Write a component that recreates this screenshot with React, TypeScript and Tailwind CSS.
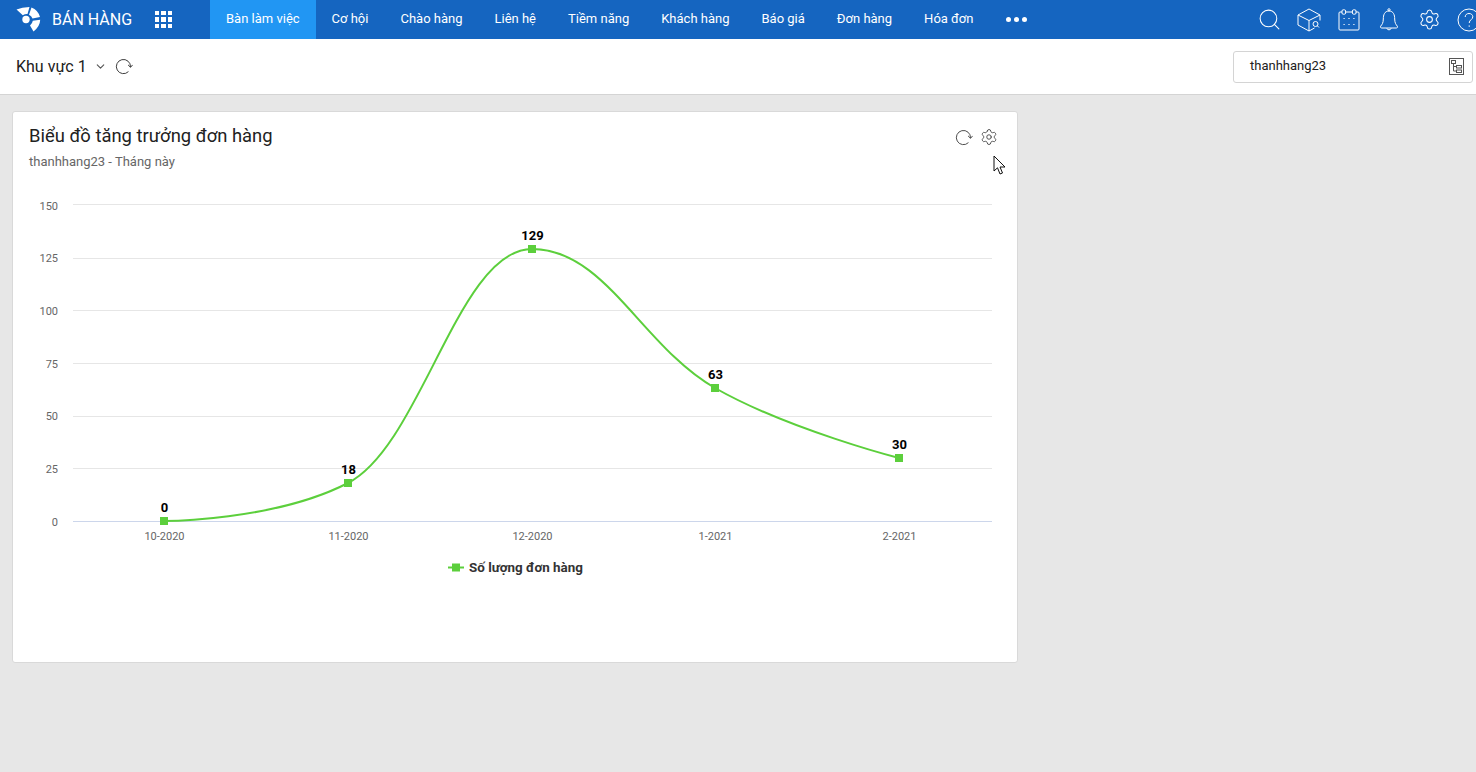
import { Search, Settings, ChevronDown } from "lucide-react";

const menu = ["Bàn làm việc", "Cơ hội", "Chào hàng", "Liên hệ", "Tiềm năng", "Khách hàng", "Báo giá", "Đơn hàng", "Hóa đơn"];

const yTicks = [
  { y: 205, line: 204.5, label: "150" },
  { y: 257, line: 258.5, label: "125" },
  { y: 310, line: 310.5, label: "100" },
  { y: 363, line: 363.5, label: "75" },
  { y: 415, line: 416.5, label: "50" },
  { y: 468, line: 468.5, label: "25" },
  { y: 521, line: 521.5, label: "0" },
];

const points = [
  { x: 164, y: 521, value: "0", month: "10-2020" },
  { x: 348, y: 483, value: "18", month: "11-2020" },
  { x: 532, y: 249, value: "129", month: "12-2020" },
  { x: 715, y: 388, value: "63", month: "1-2021" },
  { x: 899, y: 458, value: "30", month: "2-2021" },
];

const Logo = () => (
  <svg width="26" height="28" viewBox="15 6 26 28" fill="white">
    <circle cx="26" cy="19.5" r="3.7" />
    <path d="M16.5 9.5 Q22 7 29.5 7 L27.5 14 Q25 13.8 22.8 15.3 Z" />
    <path d="M31.5 7.5 Q38 10 40 17 L32.5 18.5 Q31.5 16 29 14.8 Z" />
    <path d="M40.2 19.8 Q40 26.5 33.5 31.5 L30 25.5 Q32.3 23.8 32.8 20.8 Z" />
  </svg>
);

const AppGrid = () => (
  <div className="grid grid-cols-3 gap-[2px] w-[17px]">
    {Array.from({ length: 9 }).map((_, i) => (
      <div key={i} className="w-[4.4px] h-[4.4px] bg-white" />
    ))}
  </div>
);

const BoxIcon = () => (
  <svg width="24" height="24" viewBox="0 0 24 24" fill="none" stroke="white" strokeWidth="1">
    <path d="M23 12.5 V7 L12 1 L1 7 V17 L12 23 L17.5 20" />
    <path d="M1 7 L12 12.5 V23 M12 12.5 L23 7" />
    <circle cx="18.5" cy="16" r="2.5" />
    <path d="M20.3 17.8 L22 19.5" />
  </svg>
);

const CalendarIcon = () => (
  <svg width="22" height="22" viewBox="0 0 22 22" fill="none" stroke="white" strokeWidth="1">
    <rect x="1" y="3" width="20" height="18" rx="1" />
    <rect x="4" y="0.8" width="3.6" height="4.4" rx="1.2" fill="#1565c0" />
    <rect x="14.4" y="0.8" width="3.6" height="4.4" rx="1.2" fill="#1565c0" />
    <path d="M5.5 9.5h1.2M10.4 9.5h1.2M15.3 9.5h1.2M5.5 15.5h1.2M10.4 15.5h1.2M15.3 15.5h1.2" />
  </svg>
);

const BellIcon = () => (
  <svg width="24" height="24" viewBox="0 0 24 24" fill="none" stroke="white" strokeWidth="1">
    <circle cx="12" cy="1.8" r="1.1" />
    <path d="M12 3 C7.5 3 6.3 7 6.3 11 C6.3 15 5 16.5 3.8 18 C3 19.2 3.6 20 4.8 20 H19.2 C20.4 20 21 19.2 20.2 18 C19 16.5 17.7 15 17.7 11 C17.7 7 16.5 3 12 3 Z" />
    <path d="M9.8 20.2 A2.3 2.3 0 0 0 14.2 20.2" />
  </svg>
);

const HelpIcon = () => (
  <svg width="24" height="24" viewBox="0 0 24 24" fill="none" stroke="white" strokeWidth="1">
    <circle cx="12" cy="12" r="11" />
    <path d="M8.2 9 C8.2 6.6 10 5.5 12 5.5 C14.2 5.5 15.8 6.9 15.8 8.8 C15.8 11.6 12.2 11.8 12.2 15" />
    <path d="M12.2 17.4 V18.8" />
  </svg>
);

const RefreshIcon = () => (
  <svg width="18" height="17" viewBox="0 0 19 18" fill="none" stroke="currentColor" strokeWidth="1">
    <path d="M14.2 14.4 A7.5 7.5 0 1 1 16.4 9.5" />
    <path d="M13.8 7.3 L16.4 9.9 L18.6 7.3" />
  </svg>
);

const TreeIcon = () => (
  <svg width="15" height="17" viewBox="0 0 15 17" fill="none" stroke="#555" strokeWidth="1">
    <rect x="0.5" y="0.5" width="14" height="16" />
    <rect x="2.5" y="2.5" width="4" height="3" />
    <rect x="7.5" y="7.5" width="5" height="2.5" />
    <rect x="7.5" y="12" width="5" height="2.5" />
    <path d="M4.5 5.5 V13 H7.5 M4.5 8.5 H7.5" />
  </svg>
);

const Cursor = () => (
  <svg width="14" height="21" viewBox="0 0 14 21" fill="white" stroke="#111" strokeWidth="1">
    <path d="M1 1 V16 L4.5 12.8 L7 19 L9.5 18 L7 12 H12 Z" />
  </svg>
);

const GrowthChart = () => (
  <svg width="1004" height="400" viewBox="13 190 1004 400">
    {yTicks.map((t) => (
      <g key={t.label}>
        <line x1="73" x2="992" y1={t.line} y2={t.line} stroke={t.label === "0" ? "#ccd6eb" : "#e6e6e6"} strokeWidth="1" />
        <text x="58" y={t.y + 5} textAnchor="end" fontSize="11" fill="#666666" fontFamily="Roboto, sans-serif">
          {t.label}
        </text>
      </g>
    ))}
    <path
      d="M164 521 C164 521 274.4 521 348 483 C421.6 445 458.4 249 532 249 C605.2 249 641.8 346.2 715 388 C788.6 429.8 899 458 899 458"
      fill="none"
      stroke="#5ccf3c"
      strokeWidth="2"
    />
    {points.map((p) => (
      <g key={p.month}>
        <rect x={p.x - 4} y={p.y - 4} width="8" height="8" fill="#5ccf3c" />
        <text x={p.x + 0.5} y={p.y - 9} textAnchor="middle" fontSize="13" fontWeight="700" fill="#000000" fontFamily="Roboto, sans-serif">
          {p.value}
        </text>
        <text x={p.x + 0.5} y="540" textAnchor="middle" fontSize="11" fill="#666666" fontFamily="Roboto, sans-serif">
          {p.month}
        </text>
      </g>
    ))}
    <line x1="448" x2="464" y1="567.5" y2="567.5" stroke="#5ccf3c" strokeWidth="2" />
    <rect x="452" y="563.5" width="8" height="8" fill="#5ccf3c" />
    <text x="469" y="572" fontSize="13.4" fontWeight="700" fill="#333333" fontFamily="Roboto, sans-serif">
      Số lượng đơn hàng
    </text>
  </svg>
);

export default function App() {
  return (
    <div className="h-screen w-full overflow-hidden bg-[#e7e7e7] font-['Roboto',sans-serif]">
      {/* Header */}
      <div className="h-[39px] bg-[#1565c0] flex items-center text-white">
        <div className="w-[210px] flex items-center shrink-0 pl-[15px]">
          <Logo />
          <span className="ml-[11px] text-base whitespace-nowrap">BÁN HÀNG</span>
          <div className="ml-[23px]">
            <AppGrid />
          </div>
        </div>
        <div className="flex h-full items-center">
          {menu.map((m, i) => (
            <div
              key={m}
              className={`h-full flex items-center px-4 pb-px text-[13px] whitespace-nowrap ${i === 0 ? "bg-[#2196f3]" : ""}`}
            >
              {m}
            </div>
          ))}
          <div className="flex gap-[3px] ml-[17px] mb-px">
            <span className="w-[5px] h-[5px] rounded-full bg-white" />
            <span className="w-[5px] h-[5px] rounded-full bg-white" />
            <span className="w-[5px] h-[5px] rounded-full bg-white" />
          </div>
        </div>
        <div className="ml-auto flex items-center -mr-[13px] shrink-0">
          <div className="w-[40px] flex justify-center -ml-[1px]"><Search size={25} strokeWidth={1} /></div>
          <div className="w-[40px] flex justify-center"><BoxIcon /></div>
          <div className="w-[40px] flex justify-center"><CalendarIcon /></div>
          <div className="w-[40px] flex justify-center"><BellIcon /></div>
          <div className="w-[40px] flex justify-center"><Settings size={23} strokeWidth={1.1} /></div>
          <div className="w-[40px] flex justify-center"><HelpIcon /></div>
        </div>
      </div>

      {/* Toolbar */}
      <div className="h-[56px] bg-white border-b border-[#d4d4d4] flex items-center pl-4 pr-[3px]">
        <span className="text-base text-[#212121]">Khu vực 1</span>
        <ChevronDown size={13} className="ml-[7px] text-[#555]" />
        <span className="ml-[8px] text-[#333]"><RefreshIcon /></span>
        <div className="ml-auto w-[240px] h-[32px] border border-[#d4d4d4] rounded-[3px] flex items-center justify-between pl-4 pr-[8px]">
          <span className="text-[13px] text-[#212121] -mt-px">thanhhang23</span>
          <TreeIcon />
        </div>
      </div>

      {/* Card */}
      <div className="relative mt-4 ml-3 w-[1006px] h-[552px] bg-white border border-[#d9d9d9] rounded-[3px]">
        <div className="flex justify-between pl-4 pr-[19px] pt-[12px]">
          <div>
            <div className="text-[18.4px] leading-[23px] text-[#212121]">Biểu đồ tăng trưởng đơn hàng</div>
            <div className="mt-[5px] text-[13px] leading-[20px] text-[#666666]">thanhhang23 - Tháng này</div>
          </div>
          <div className="flex items-center h-[18px] gap-[7px] mt-[4px] text-[#444]">
            <RefreshIcon />
            <Settings size={18} strokeWidth={1.2} />
          </div>
        </div>
        <div className="mt-[18px]">
          <GrowthChart />
        </div>
        <div className="absolute left-[980px] top-[43px]">
          <Cursor />
        </div>
      </div>
    </div>
  );
}
